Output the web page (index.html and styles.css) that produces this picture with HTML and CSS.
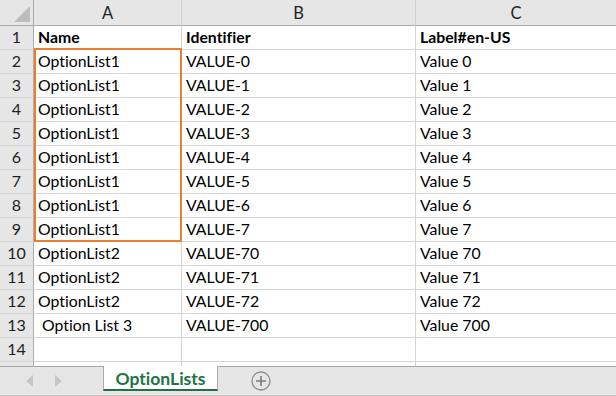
FILE: index.html
```html
<!DOCTYPE html>
<html>
<head>
<meta charset="utf-8">
<link rel="stylesheet" href="styles.css">
</head>
<body>
<div class="sheet">
  <div class="grid">
    <div class="corner"><svg class="tri" width="16" height="16" viewBox="0 0 16 16"><polygon points="16,0 16,16 0,16" fill="#bdbdbd"/></svg></div>
    <div class="colhead">A</div>
    <div class="colhead">B</div>
    <div class="colhead last">C</div>

    <div class="rowhead">1</div><div class="cell b">Name</div><div class="cell b">Identifier</div><div class="cell b last">Label#en-US</div>
    <div class="rowhead">2</div><div class="cell">OptionList1</div><div class="cell">VALUE-0</div><div class="cell last">Value 0</div>
    <div class="rowhead">3</div><div class="cell">OptionList1</div><div class="cell">VALUE-1</div><div class="cell last">Value 1</div>
    <div class="rowhead">4</div><div class="cell">OptionList1</div><div class="cell">VALUE-2</div><div class="cell last">Value 2</div>
    <div class="rowhead">5</div><div class="cell">OptionList1</div><div class="cell">VALUE-3</div><div class="cell last">Value 3</div>
    <div class="rowhead">6</div><div class="cell">OptionList1</div><div class="cell">VALUE-4</div><div class="cell last">Value 4</div>
    <div class="rowhead">7</div><div class="cell">OptionList1</div><div class="cell">VALUE-5</div><div class="cell last">Value 5</div>
    <div class="rowhead">8</div><div class="cell">OptionList1</div><div class="cell">VALUE-6</div><div class="cell last">Value 6</div>
    <div class="rowhead">9</div><div class="cell">OptionList1</div><div class="cell">VALUE-7</div><div class="cell last">Value 7</div>
    <div class="rowhead">10</div><div class="cell">OptionList2</div><div class="cell">VALUE-70</div><div class="cell last">Value 70</div>
    <div class="rowhead">11</div><div class="cell">OptionList2</div><div class="cell">VALUE-71</div><div class="cell last">Value 71</div>
    <div class="rowhead">12</div><div class="cell">OptionList2</div><div class="cell">VALUE-72</div><div class="cell last">Value 72</div>
    <div class="rowhead">13</div><div class="cell pre"> Option List 3</div><div class="cell">VALUE-700</div><div class="cell last">Value 700</div>
    <div class="rowhead">14</div><div class="cell"></div><div class="cell"></div><div class="cell last"></div>
    <div class="rowhead"></div><div class="cell"></div><div class="cell"></div><div class="cell last"></div>
  </div>
  <div class="selection"></div>
</div>
<div class="tabbar">
  <div class="nav">
    <svg width="8" height="12" viewBox="0 0 8 12"><polygon points="7,0 7,12 0,6" fill="#c6c6c6"/></svg>
    <svg width="8" height="12" viewBox="0 0 8 12"><polygon points="1,0 1,12 8,6" fill="#c6c6c6"/></svg>
  </div>
  <div class="tab">OptionLists</div>
  <div class="add">
    <svg width="20" height="20" viewBox="0 0 20 20"><circle cx="10" cy="10" r="9" fill="none" stroke="#8c8c8c" stroke-width="1.3"/><path d="M10 5v10M5 10h10" stroke="#7a7a7a" stroke-width="1.6"/></svg>
  </div>
</div>
</body>
</html>
```
FILE: styles.css
```css
* { box-sizing: border-box; }
html, body { margin: 0; padding: 0; }
body {
  width: 616px;
  height: 396px;
  overflow: hidden;
  background: #fff;
  font-family: Lato, "Noto Sans", sans-serif;
  font-variant-ligatures: none;
  color: #000;
}
.sheet {
  position: relative;
  height: 366px;
  overflow: hidden;
}
.grid {
  display: grid;
  grid-template-columns: 34px 148px 234px 1fr;
  grid-template-rows: 26px;
  grid-auto-rows: 24px;
}
.corner {
  background: #e6e6e6;
  border-right: 1px solid #ababab;
  border-bottom: 1px solid #ababab;
  display: flex;
  align-items: flex-end;
  justify-content: flex-end;
  padding: 0 3px 3px 0;
}
.colhead {
  background: #e6e6e6;
  border-right: 1px solid #d0d0d0;
  border-bottom: 1px solid #ababab;
  display: flex;
  align-items: center;
  justify-content: center;
  font-size: 16.5px;
  color: #222;
  padding-top: 1px;
}
.colhead.last { border-right: none; }
.rowhead {
  background: #e6e6e6;
  border-right: 1px solid #ababab;
  border-bottom: 1px solid #d4d4d4;
  display: flex;
  align-items: flex-end;
  justify-content: center;
  font-size: 16px;
  line-height: 18px;
  padding-bottom: 3px;
  color: #222;
}
.cell {
  border-right: 1px solid #d4d4d4;
  border-bottom: 1px solid #d4d4d4;
  font-size: 15.8px;
  line-height: 18px;
  padding: 0 4px 3px 4px;
  display: flex;
  align-items: flex-end;
  white-space: nowrap;
  overflow: hidden;
}
.cell.last { border-right: none; }
.cell.b { font-weight: bold; }
.cell.pre { white-space: pre; }
.selection {
  position: absolute;
  left: 34px;
  top: 48px;
  width: 148px;
  height: 194px;
  border: 2px solid #ed7d31;
  pointer-events: none;
}
.tabbar {
  height: 30px;
  background: #e6e6e6;
  border-top: 1px solid #a6a6a6;
  border-bottom: 1px solid #c8c8c8;
  display: flex;
  align-items: flex-start;
}
.nav {
  width: 103px;
  height: 28px;
  display: flex;
  align-items: center;
  gap: 20px;
  padding-left: 26px;
}
.tab {
  width: 115px;
  height: 25px;
  background: #fff;
  border-left: 1px solid #ababab;
  border-right: 1px solid #ababab;
  border-bottom: 2px solid #217346;
  color: #217346;
  font-weight: bold;
  font-size: 17.5px;
  display: flex;
  align-items: center;
  justify-content: center;
  margin-top: -1px;
  padding-top: 1px;
}
.add {
  margin-left: 33px;
  height: 28px;
  display: flex;
  align-items: center;
}
```
